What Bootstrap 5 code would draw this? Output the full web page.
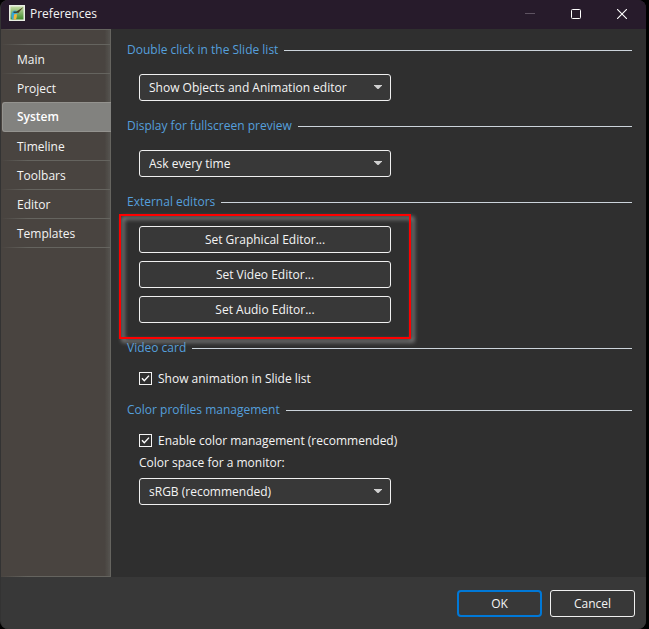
<!DOCTYPE html>
<html lang="en">
<head>
<meta charset="utf-8">
<meta name="viewport" content="width=device-width, initial-scale=1">
<title>Preferences</title>
<link href="https://cdn.jsdelivr.net/npm/bootstrap@5.3.0/dist/css/bootstrap.min.css" rel="stylesheet">
<style>
  body { background: #000; color: #f4f4f4; font-family: "Open Sans", "Noto Sans", sans-serif; font-size: 12px; line-height: 18px; }
  .window { background: #2f2f2f; border-left: 1px solid #333; margin-right: 3px; border-radius: 8px; overflow: hidden; }
  .titlebar { height: 29px; background: #271b2b; padding: 0 8px; }
  .titlebar h1 { font-size: 12px; line-height: 18px; margin: 0 0 2px 5px; font-weight: 400; }
  .app-icon { margin-bottom: 3px; }
  .caption-btn { width: 46px; height: 27px; background: none; border: 0; color: #fff; padding: 0; }
  .caption-group { margin-right: -7px; margin-bottom: 2px; }
  .caption-btn:disabled { color: #5e5361; }
  .side { width: 110px; background: linear-gradient(90deg, transparent 95%, #55534f), #494440; border: solid #65645f; border-width: 1px 1px 1px 0; border-image: linear-gradient(90deg, #494440, #65645f 25%) 1; padding-top: 14px; }
  .side .nav-link { height: 29px; padding: 7px 16px 4px; color: #f4f4f4; line-height: 18px; }
  .side .nav-item { background: linear-gradient(90deg, #494440, #65645f 25%) top / 100% 1px no-repeat; }
  .side .nav-item:last-child { padding-bottom: 1px; background: linear-gradient(90deg, #494440, #65645f 25%) top / 100% 1px no-repeat, linear-gradient(90deg, #494440, #65645f 25%) bottom / 100% 1px no-repeat; }
  .side .nav-link.active { background: #82827f; border: 1px solid #94938f; border-right: 0; border-radius: 3px 0 0 3px; margin: 0 -1px -1px 1px; height: 30px; padding: 5px 14px; font-weight: 600; color: #fff; position: relative; }
  .content { padding: 12px 14px 16px 16px; }
  .group-title { font-size: 12px; line-height: 18px; color: #559fdc; margin: 0; gap: 6px; font-weight: 400; }
  .group-title::after { content: ""; flex: 1; height: 1px; background: #ccd4db; }
  .group-body { padding: 15px 0 16px 12px; }
  .group-tight { padding: 13px 0 13px 12px; }
  .control { max-width: 252px; }
  .control .form-select, .dialog-btn { height: 27px; font-size: 12px; line-height: 18px; color: #f4f4f4; background-color: #383838; border: 1px solid #f0f0f0; border-radius: 3px; }
  .control .form-select { padding: 4px 24px 3px 9px; background-image: url("data:image/svg+xml,%3Csvg xmlns='http://www.w3.org/2000/svg' viewBox='0 0 8 4'%3E%3Cpath d='M0 0h8v.5L4.500 4h-1L0 .5z' fill='%23d0d0d0'/%3E%3C/svg%3E"); background-size: 8px 4px; background-position: right 8px top 10px; }
  .dialog-btn { padding: 4px 8px 3px; }
  .dialog-btn:hover { background: #484848; color: #fff; border-color: #fff; }
  .button-stack { gap: 8px; }
  .highlight { position: absolute; inset: -12px -20px -16px; border: 2px solid #f00; filter: drop-shadow(3px 3px 2px #aaa); pointer-events: none; }
  .check-row { gap: 6px; }
  .check-row .form-check-input { width: 13px; height: 13px; margin: 0 0 1px; border: 1px solid #f4f4f4; border-radius: 0; background-color: #2f2f2f; }
  .check-row .form-check-input:checked { background-color: #2f2f2f; border-color: #f4f4f4; background-image: url("data:image/svg+xml,%3Csvg xmlns='http://www.w3.org/2000/svg' viewBox='0 0 11 11'%3E%3Cpath d='M2 5.2L4.3 7.8L9 2.6' fill='none' stroke='%23fff' stroke-width='1.4'/%3E%3C/svg%3E"); }
  .label-row { margin: 4px 0 6px; }
  .footer-bar { background: #383838; padding: 13px 11px 12px; gap: 8px; }
  .footer-bar .dialog-btn { width: 85px; }
  .footer-bar .ok-btn { border: 2px solid #0078d7; border-radius: 4px; padding: 3px 8px 2px; }
</style>
</head>
<body>
<div class="window d-flex flex-column min-vh-100">
  <header class="titlebar d-flex align-items-center">
    <svg class="app-icon" width="16" height="16" viewBox="0 0 16 16" aria-hidden="true">
      <defs><linearGradient id="leaf" x2="0" y2="1"><stop stop-color="#c5dda5"/><stop offset="1" stop-color="#3f8a2c"/></linearGradient></defs>
      <path fill="#e9eee4" d="M0 0h16v16H0z"/><path fill="url(#leaf)" d="M1.500 1.500h13v13h-13z"/>
      <path fill="#35a6d8" d="M2.500 10c0-3 1.500-4.500 4-4.500C8.500 6 9 8 8 10l-3 4.500H3.500C2.500 13 2.500 12 2.500 10z"/>
      <path fill="#efb63a" d="M5 9.500l2.500-1c1 2 0 4.500-.5 6H4.500z"/><path fill="#4c3b20" d="M7.500 6.500L14.500 2 9 8.200z"/><path fill="#3b4a3a" d="M4.500 6.500h4v1.500h-4z"/>
    </svg>
    <h1>Preferences</h1>
    <div class="caption-group ms-auto d-flex">
      <button class="caption-btn" type="button" aria-label="Minimize" disabled><svg width="10" height="10" viewBox="0 0 10 10" class="d-block mx-auto"><path d="M0 4.500h10" stroke="currentColor"/></svg></button>
      <button class="caption-btn" type="button" aria-label="Maximize"><svg width="10" height="10" viewBox="0 0 10 10" class="d-block mx-auto"><rect x=".5" y=".5" width="9" height="9" rx="1" fill="none" stroke="currentColor"/></svg></button>
      <button class="caption-btn" type="button" aria-label="Close"><svg width="10" height="10" viewBox="0 0 10 10" class="d-block mx-auto"><path d="M0 0l10 10M10 0L0 10" stroke="currentColor" stroke-width="1.100"/></svg></button>
    </div>
  </header>
  <div class="d-flex flex-grow-1">
    <nav class="side flex-shrink-0" aria-label="Preference pages">
      <ul class="nav flex-column">
        <li class="nav-item"><a class="nav-link" href="#main">Main</a></li>
        <li class="nav-item"><a class="nav-link" href="#project">Project</a></li>
        <li class="nav-item"><a class="nav-link active" href="#system" aria-current="page">System</a></li>
        <li class="nav-item"><a class="nav-link" href="#timeline">Timeline</a></li>
        <li class="nav-item"><a class="nav-link" href="#toolbars">Toolbars</a></li>
        <li class="nav-item"><a class="nav-link" href="#editor">Editor</a></li>
        <li class="nav-item"><a class="nav-link" href="#templates">Templates</a></li>
      </ul>
    </nav>
    <main class="content flex-grow-1">
      <section>
        <h2 class="group-title d-flex align-items-center"><label for="dblclick">Double click in the Slide list</label></h2>
        <div class="group-body"><div class="control"><select class="form-select" id="dblclick"><option>Show Objects and Animation editor</option></select></div></div>
      </section>
      <section>
        <h2 class="group-title d-flex align-items-center"><label for="display">Display for fullscreen preview</label></h2>
        <div class="group-body"><div class="control"><select class="form-select" id="display"><option>Ask every time</option></select></div></div>
      </section>
      <section>
        <h2 class="group-title d-flex align-items-center">External editors</h2>
        <div class="group-body">
          <div class="control button-stack position-relative d-flex flex-column">
            <button class="btn dialog-btn" type="button">Set Graphical Editor...</button>
            <button class="btn dialog-btn" type="button">Set Video Editor...</button>
            <button class="btn dialog-btn" type="button">Set Audio Editor...</button>
            <div class="highlight"></div>
          </div>
        </div>
      </section>
      <section>
        <h2 class="group-title d-flex align-items-center">Video card</h2>
        <div class="group-tight">
          <div class="check-row d-flex align-items-center"><input class="form-check-input" type="checkbox" id="anim" checked><label for="anim">Show animation in Slide list</label></div>
        </div>
      </section>
      <section>
        <h2 class="group-title d-flex align-items-center">Color profiles management</h2>
        <div class="group-tight">
          <div class="check-row d-flex align-items-center"><input class="form-check-input" type="checkbox" id="cm" checked><label for="cm">Enable color management (recommended)</label></div>
          <label class="label-row d-block" for="space">Color space for a monitor:</label>
          <div class="control"><select class="form-select" id="space"><option>sRGB (recommended)</option></select></div>
        </div>
      </section>
    </main>
  </div>
  <footer class="footer-bar d-flex justify-content-end">
    <button class="btn dialog-btn ok-btn" type="button">OK</button>
    <button class="btn dialog-btn" type="button">Cancel</button>
  </footer>
</div>
<script src="https://cdn.jsdelivr.net/npm/bootstrap@5.3.0/dist/js/bootstrap.bundle.min.js"></script>
</body>
</html>
